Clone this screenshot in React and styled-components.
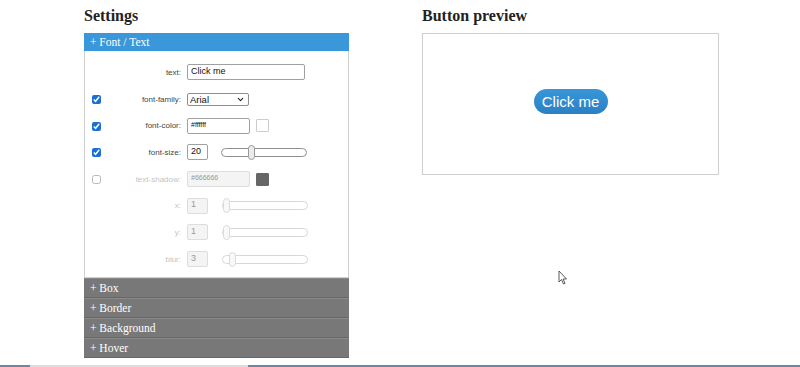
import React from "react";
import styled, { createGlobalStyle } from "styled-components";
import { ChevronDown } from "lucide-react";

const Global = createGlobalStyle`
  html, body { margin: 0; padding: 0; background: #fff; }
  body { font-family: "Liberation Serif", serif; overflow: hidden; }
`;

const Page = styled.div`
  position: relative;
  width: 800px;
  height: 367px;
  display: flex;
  gap: 73px;
  padding-left: 84px;
  box-sizing: border-box;
`;

const Column = styled.div`
  width: ${(p) => p.width}px;
  display: flex;
  flex-direction: column;
`;

const Heading = styled.h2`
  margin: 0;
  height: 33px;
  line-height: 31px;
  font-family: "Liberation Serif", serif;
  font-size: 16px;
  font-weight: bold;
  color: #222;
`;

const Section = styled.div`
  height: 18px;
  line-height: 18px;
  padding-left: 6px;
  color: #fff;
  font-family: "Liberation Serif", serif;
  font-size: 11.5px;
  background: ${(p) => (p.open ? "#3a97d9" : "#787878")};
  border-top: ${(p) => (p.open ? "none" : "1px solid #8a8a8a")};
  border-bottom: ${(p) => (p.open ? "none" : "1px solid #676767")};
`;

const SectionBody = styled.div`
  border: 1px solid #cfcfcf;
  border-top: none;
  padding: 8px 0 4px 6px;
  display: grid;
  grid-template-columns: 20px 64px 1fr;
  grid-auto-rows: 26.7px;
  column-gap: 6px;
  align-items: center;
`;

const Check = styled.input`
  margin: 0 0 0 1px;
  width: 9px;
  height: 9px;
  accent-color: #1a6fd6;
  opacity: ${(p) => (p.checked ? 1 : 0.5)};
`;

const Label = styled.label`
  text-align: right;
  font-family: "Liberation Sans", Arial, sans-serif;
  font-size: 8px;
  color: ${(p) => (p.disabled ? "#c4c4c4" : "#444")};
`;

const Controls = styled.div`
  display: flex;
  align-items: center;
  gap: ${(p) => p.gap || 6}px;
`;

const TextInput = styled.input`
  box-sizing: border-box;
  width: ${(p) => p.w}px;
  height: 16px;
  margin: 0;
  padding: 0 3px 3px;
  border: 1px solid ${(p) => (p.disabled ? "#ddd" : "#a0a0a0")};
  border-radius: 2px;
  background: ${(p) => (p.disabled ? "#f4f4f4" : "#fff")};
  color: ${(p) => (p.disabled ? "#999" : "#111")};
  font-family: "Liberation Sans", Arial, sans-serif;
  font-size: ${(p) => (p.small ? 7 : 9)}px;
  outline: none;
`;

const SelectWrap = styled.div`
  position: relative;
  width: 62px;
  height: 13px;
  line-height: 0;
  svg {
    position: absolute;
    right: 4px;
    top: 2px;
    pointer-events: none;
  }
`;

const Select = styled.select`
  appearance: none;
  display: block;
  box-sizing: border-box;
  width: 100%;
  height: 13px;
  margin: 0;
  padding: 0 2px;
  border: 1px solid #8f8f8f;
  border-radius: 2px;
  background: #fff;
  font-family: "Liberation Sans", Arial, sans-serif;
  font-size: 9.5px;
  line-height: 11px;
  color: #111;
`;

const Swatch = styled.div`
  width: 13px;
  height: 13px;
  box-sizing: border-box;
  border: 1px solid ${(p) => (p.color === "#fff" ? "#ccc" : p.color)};
  background: ${(p) => p.color};
  border-radius: 1px;
`;

const Range = styled.input`
  appearance: none;
  -webkit-appearance: none;
  margin: 0;
  width: 86px;
  height: 14px;
  background: transparent;
  opacity: ${(p) => (p.disabled ? 0.35 : 1)};
  &::-webkit-slider-runnable-track {
    height: 9px;
    box-sizing: border-box;
    border: 1px solid #8f8f8f;
    border-radius: 5px;
    background: #fff;
  }
  &::-webkit-slider-thumb {
    -webkit-appearance: none;
    width: 7px;
    height: 15px;
    margin-top: -4px;
    box-sizing: border-box;
    border: 1px solid #9a9a9a;
    border-radius: 4px;
    background: #ececec;
  }
`;

const Preview = styled.div`
  height: 142px;
  box-sizing: border-box;
  border: 1px solid #cfcfcf;
  display: flex;
  align-items: center;
  justify-content: center;
`;

const PreviewButton = styled.button`
  margin: -5px 0 0 0;
  width: 74px;
  height: 25px;
  border: none;
  border-radius: 13px;
  background: linear-gradient(#3896d9, #2b80c4);
  color: #fff;
  font-family: "Liberation Sans", Arial, sans-serif;
  font-size: 15px;
  padding: 0;
`;

const Cursor = styled.svg`
  position: absolute;
  left: 558px;
  top: 270px;
`;

const BottomBar = styled.div`
  position: absolute;
  left: 0;
  bottom: 0;
  width: 800px;
  height: 2px;
  display: flex;
`;

const BarPart = styled.div`
  width: ${(p) => p.w}px;
  flex: ${(p) => (p.w ? "none" : 1)};
  background: ${(p) => p.color};
`;

const Row = ({ check, label, disabled, children }) => (
  <>
    <div>{check !== undefined && <Check type="checkbox" checked={check} readOnly />}</div>
    <Label disabled={disabled}>{label}</Label>
    {children}
  </>
);

export default function App() {
  return (
    <>
      <Global />
      <Page>
        <Column width={265}>
          <Heading>Settings</Heading>
          <Section open>+ Font / Text</Section>
          <SectionBody>
            <Row label="text:">
              <TextInput w={118} defaultValue="Click me" />
            </Row>
            <Row check label="font-family:">
              <SelectWrap>
                <Select defaultValue="Arial">
                  <option>Arial</option>
                  <option>Verdana</option>
                </Select>
                <ChevronDown size={9} strokeWidth={3} color="#222" />
              </SelectWrap>
            </Row>
            <Row check label="font-color:">
              <Controls>
                <TextInput w={63} small defaultValue="#ffffff" />
                <Swatch color="#fff" />
              </Controls>
            </Row>
            <Row check label="font-size:">
              <Controls gap={13}>
                <TextInput w={21} defaultValue="20" />
                <Range type="range" min={0} max={60} defaultValue={20} readOnly />
              </Controls>
            </Row>
            <Row check={false} label="text-shadow:" disabled>
              <Controls>
                <TextInput w={63} small disabled defaultValue="#666666" />
                <Swatch color="#666" />
              </Controls>
            </Row>
            <Row label="x:" disabled>
              <Controls gap={14}>
                <TextInput w={21} disabled defaultValue="1" />
                <Range type="range" disabled min={0} max={100} defaultValue={0} />
              </Controls>
            </Row>
            <Row label="y:" disabled>
              <Controls gap={14}>
                <TextInput w={21} disabled defaultValue="1" />
                <Range type="range" disabled min={0} max={100} defaultValue={0} />
              </Controls>
            </Row>
            <Row label="blur:" disabled>
              <Controls gap={14}>
                <TextInput w={21} disabled defaultValue="3" />
                <Range type="range" disabled min={0} max={40} defaultValue={3} />
              </Controls>
            </Row>
          </SectionBody>
          <Section>+ Box</Section>
          <Section>+ Border</Section>
          <Section>+ Background</Section>
          <Section>+ Hover</Section>
        </Column>
        <Column width={297}>
          <Heading>Button preview</Heading>
          <Preview>
            <PreviewButton>Click me</PreviewButton>
          </Preview>
        </Column>
        <Cursor width="10" height="15" viewBox="0 0 10 15">
          <path d="M1 1 L1 12 L3.5 9.5 L5.5 14 L7 13.3 L5 9 L8.5 9 Z" fill="#fff" stroke="#333" strokeWidth="0.8" />
        </Cursor>
        <BottomBar>
          <BarPart w={30} color="#6d879d" />
          <BarPart w={218} color="#d9dde0" />
          <BarPart color="#6d879d" />
        </BottomBar>
      </Page>
    </>
  );
}
